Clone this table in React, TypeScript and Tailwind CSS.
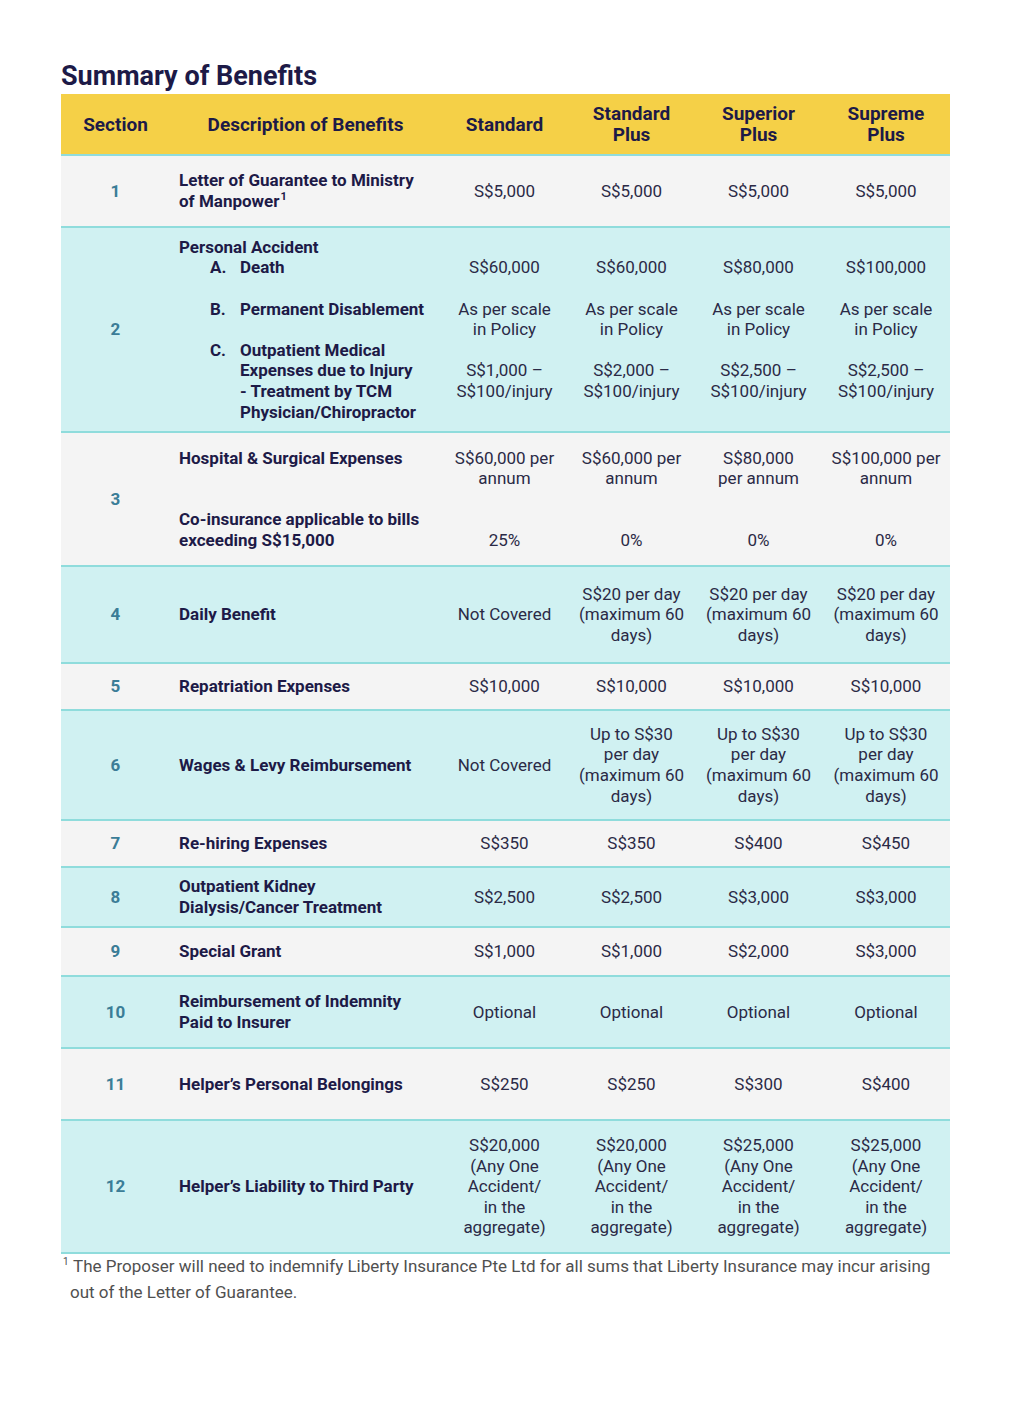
import React from "react";

type Row = {
  n: string;
  tone: "gray" | "cyan";
  h: string;
  desc: React.ReactNode;
  vals: string[][];
};

const navy = "text-[#1d1a47]";

function Item({ mark, children }: { mark: string; children: React.ReactNode }) {
  return (
    <div className="flex pl-[31px]">
      <span className="w-[30px] shrink-0">{mark}</span>
      <div>{children}</div>
    </div>
  );
}

const same = (lines: string[]) => [lines, lines, lines, lines];

const rows: Row[] = [
  {
    n: "1",
    tone: "gray",
    h: "h-[72px]",
    desc: (
      <>
        Letter of Guarantee to Ministry
        <br />
        of Manpower<sup className="text-[11px] ml-[1px] -top-[7px]">1</sup>
      </>
    ),
    vals: same(["S$5,000"]),
  },
  {
    n: "2",
    tone: "cyan",
    h: "h-[205px]",
    desc: (
      <>
        <div>Personal Accident</div>
        <Item mark="A.">Death</Item>
        <div>&nbsp;</div>
        <Item mark="B.">Permanent Disablement</Item>
        <div>&nbsp;</div>
        <Item mark="C.">
          Outpatient Medical
          <br />
          Expenses due to Injury
          <br />- Treatment by TCM
          <br />
          Physician/Chiropractor
        </Item>
      </>
    ),
    vals: [
      ["", "S$60,000", "", "As per scale", "in Policy", "", "S$1,000 –", "S$100/injury", ""],
      ["", "S$60,000", "", "As per scale", "in Policy", "", "S$2,000 –", "S$100/injury", ""],
      ["", "S$80,000", "", "As per scale", "in Policy", "", "S$2,500 –", "S$100/injury", ""],
      ["", "S$100,000", "", "As per scale", "in Policy", "", "S$2,500 –", "S$100/injury", ""],
    ],
  },
  {
    n: "3",
    tone: "gray",
    h: "h-[134px]",
    desc: (
      <>
        <div>Hospital &amp; Surgical Expenses</div>
        <div>&nbsp;</div>
        <div>&nbsp;</div>
        <div>Co-insurance applicable to bills</div>
        <div>exceeding S$15,000</div>
      </>
    ),
    vals: [
      ["S$60,000 per", "annum", "", "", "25%"],
      ["S$60,000 per", "annum", "", "", "0%"],
      ["S$80,000", "per annum", "", "", "0%"],
      ["S$100,000 per", "annum", "", "", "0%"],
    ],
  },
  {
    n: "4",
    tone: "cyan",
    h: "h-[97px]",
    desc: "Daily Benefit",
    vals: [
      ["Not Covered"],
      ["S$20 per day", "(maximum 60", "days)"],
      ["S$20 per day", "(maximum 60", "days)"],
      ["S$20 per day", "(maximum 60", "days)"],
    ],
  },
  {
    n: "5",
    tone: "gray",
    h: "h-[47px]",
    desc: "Repatriation Expenses",
    vals: same(["S$10,000"]),
  },
  {
    n: "6",
    tone: "cyan",
    h: "h-[110px]",
    desc: "Wages & Levy Reimbursement",
    vals: [
      ["Not Covered"],
      ["Up to S$30", "per day", "(maximum 60", "days)"],
      ["Up to S$30", "per day", "(maximum 60", "days)"],
      ["Up to S$30", "per day", "(maximum 60", "days)"],
    ],
  },
  {
    n: "7",
    tone: "gray",
    h: "h-[47px]",
    desc: "Re-hiring Expenses",
    vals: [["S$350"], ["S$350"], ["S$400"], ["S$450"]],
  },
  {
    n: "8",
    tone: "cyan",
    h: "h-[60px]",
    desc: (
      <>
        Outpatient Kidney
        <br />
        Dialysis/Cancer Treatment
      </>
    ),
    vals: [["S$2,500"], ["S$2,500"], ["S$3,000"], ["S$3,000"]],
  },
  {
    n: "9",
    tone: "gray",
    h: "h-[49px]",
    desc: "Special Grant",
    vals: [["S$1,000"], ["S$1,000"], ["S$2,000"], ["S$3,000"]],
  },
  {
    n: "10",
    tone: "cyan",
    h: "h-[72px]",
    desc: (
      <>
        Reimbursement of Indemnity
        <br />
        Paid to Insurer
      </>
    ),
    vals: same(["Optional"]),
  },
  {
    n: "11",
    tone: "gray",
    h: "h-[72px]",
    desc: "Helper’s Personal Belongings",
    vals: [["S$250"], ["S$250"], ["S$300"], ["S$400"]],
  },
  {
    n: "12",
    tone: "cyan",
    h: "h-[133px]",
    desc: "Helper’s Liability to Third Party",
    vals: [
      ["S$20,000", "(Any One", "Accident/", "in the", "aggregate)"],
      ["S$20,000", "(Any One", "Accident/", "in the", "aggregate)"],
      ["S$25,000", "(Any One", "Accident/", "in the", "aggregate)"],
      ["S$25,000", "(Any One", "Accident/", "in the", "aggregate)"],
    ],
  },
];

const cols = "grid grid-cols-[109px_271px_127px_127px_127px_128px]";

export default function App() {
  return (
    <div
      className="min-h-[1428px] bg-white pl-[61px] pt-[60px]"
      style={{ fontFamily: "Roboto, 'Liberation Sans', sans-serif" }}
    >
      <div className="w-[889px]">
        <h1 className={`text-[27px] leading-[32px] font-bold ${navy} mb-[2px]`}>
          Summary of Benefits
        </h1>

        <div className={`${cols} h-[62px] bg-[#f5d047] border-b-2 border-[#8fdcdc] items-center text-[19px] leading-[21px] font-bold ${navy} text-center`}>
          <div>Section</div>
          <div>Description of Benefits</div>
          <div>Standard</div>
          <div>
            Standard
            <br />
            Plus
          </div>
          <div>
            Superior
            <br />
            Plus
          </div>
          <div>
            Supreme
            <br />
            Plus
          </div>
        </div>

        {rows.map((r) => (
          <div
            key={r.n}
            className={`${cols} ${r.h} items-center border-b-2 border-[#8fdcdc] text-[17px] leading-[20.6px] ${
              r.tone === "gray" ? "bg-[#f4f4f4]" : "bg-[#d0f1f2]"
            }`}
          >
            <div className="text-center font-bold text-[#3b7d97]">{r.n}</div>
            <div className={`pl-[9px] font-bold ${navy}`}>{r.desc}</div>
            {r.vals.map((lines, i) => (
              <div key={i} className="text-center text-[#2b2a46]">
                {lines.map((l, j) => (
                  <div key={j}>{l || "\u00a0"}</div>
                ))}
              </div>
            ))}
          </div>
        ))}

        <div className="flex text-[17px] leading-[26px] text-[#505050] -mt-[1px]">
          <span className="w-[12px] shrink-0 pl-[2px] text-[10px] leading-[18px]">1</span>
          <p>
            The Proposer will need to indemnify Liberty Insurance Pte Ltd for all sums that Liberty Insurance may incur arising
            <br />
            <span className="-ml-[3px]">out of the Letter of Guarantee.</span>
          </p>
        </div>
      </div>
    </div>
  );
}
